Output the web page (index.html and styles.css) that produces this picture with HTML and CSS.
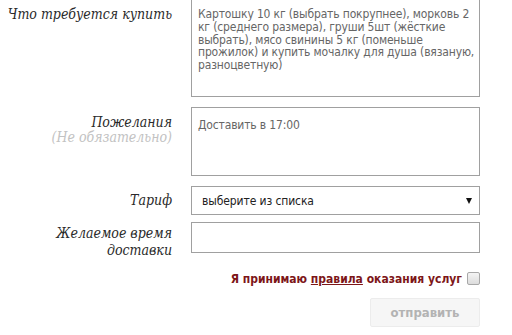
FILE: index.html
```html
<!DOCTYPE html>
<html lang="ru">
<head>
<meta charset="utf-8">
<link rel="stylesheet" href="styles.css">
</head>
<body>
<form class="order">
  <div class="row row-list">
    <label class="label">Что требуется купить</label>
    <textarea class="field area area-list">Картошку 10 кг (выбрать покрупнее), морковь 2
кг (среднего размера), груши 5шт (жёсткие
выбрать), мясо свинины 5 кг (поменьше
прожилок) и купить мочалку для душа (вязаную,
разноцветную)</textarea>
  </div>
  <div class="row row-wish">
    <label class="label">Пожелания<span class="optional">(Не обязательно)</span></label>
    <textarea class="field area area-wish">Доставить в 17:00</textarea>
  </div>
  <div class="row row-tariff">
    <label class="label label-mid">Тариф</label>
    <div class="select-wrap">
      <select class="field select"><option>выберите из списка</option></select>
    </div>
  </div>
  <div class="row row-time">
    <label class="label label-two">Желаемое время доставки</label>
    <input class="field input" type="text">
  </div>
  <div class="agree">
    <span class="agree-text">Я принимаю <a href="#" class="rules">правила</a> оказания услуг</span>
    <span class="check"></span>
  </div>
  <div class="actions">
    <button type="button" class="submit">отправить</button>
  </div>
</form>
</body>
</html>
```

FILE: styles.css
```css
html, body {
  margin: 0;
  padding: 0;
  background: #fff;
}

.order {
  display: flex;
  flex-direction: column;
  width: 480px;
  margin-top: -1px;
}

.row {
  display: grid;
  grid-template-columns: 172px 289px;
  column-gap: 19px;
  align-items: start;
}

.row-wish { margin-top: 10px; }
.row-tariff { margin-top: 10px; }
.row-time { margin-top: 7px; }

.label {
  font-family: "DejaVu Serif Condensed", "DejaVu Serif", serif;
  font-style: italic;
  font-size: 14px;
  line-height: 16px;
  color: #2a2a2a;
  text-align: right;
  padding-top: 7px;
}

.row-wish .label { padding-top: 7px; }

.label-mid { padding-top: 6px; }
.label-two { padding-top: 3px; line-height: 17px; }

.optional {
  display: block;
  color: #c2c2c2;
  line-height: 15px;
}

.field {
  box-sizing: border-box;
  margin: 0;
  border: 1px solid #a0a0a0;
  border-radius: 0;
  background: #fff;
  font-family: "DejaVu Sans Condensed", "DejaVu Sans", sans-serif;
  font-size: 12px;
  color: #666;
  outline: none;
}

.area {
  display: block;
  width: 289px;
  resize: none;
  padding: 8px 6px;
  line-height: 12.75px;
  letter-spacing: -0.15px;
  white-space: pre;
  overflow: hidden;
}

.area-list { height: 98px; }
.area-wish { height: 69px; padding-top: 11px; }

.select-wrap {
  position: relative;
  width: 289px;
}

.select {
  display: block;
  width: 289px;
  height: 29px;
  padding: 0 10px;
  -webkit-appearance: none;
  appearance: none;
  color: #222;
  letter-spacing: -0.1px;
}

.select-wrap::after {
  content: "";
  position: absolute;
  right: 8px;
  top: 12px;
  border-left: 3px solid transparent;
  border-right: 3px solid transparent;
  border-top: 6px solid #111;
  pointer-events: none;
}

.input {
  display: block;
  width: 289px;
  height: 31px;
  padding: 0 8px;
}

.agree {
  display: flex;
  justify-content: flex-end;
  align-items: center;
  gap: 5px;
  margin-top: 13px;
  height: 13px;
}

.agree-text {
  font-family: "DejaVu Sans Condensed", "DejaVu Sans", sans-serif;
  font-weight: bold;
  font-size: 12px;
  color: #7d1618;
}

.rules {
  color: #7d1618;
  text-decoration: underline;
}

.check {
  box-sizing: border-box;
  width: 13px;
  height: 13px;
  border: 1px solid #a8a8a8;
  border-radius: 2px;
  background: linear-gradient(#f4f4f4, #dcdcdc);
}

.actions {
  display: flex;
  justify-content: flex-end;
  margin-top: 13px;
}

.submit {
  box-sizing: border-box;
  width: 110px;
  height: 29px;
  border: 1px solid #ececec;
  border-radius: 2px;
  background: #f6f6f6;
  font-family: "DejaVu Sans Condensed", "DejaVu Sans", sans-serif;
  font-weight: bold;
  font-size: 13px;
  color: #b3b3b3;
  padding: 0;
}
```
